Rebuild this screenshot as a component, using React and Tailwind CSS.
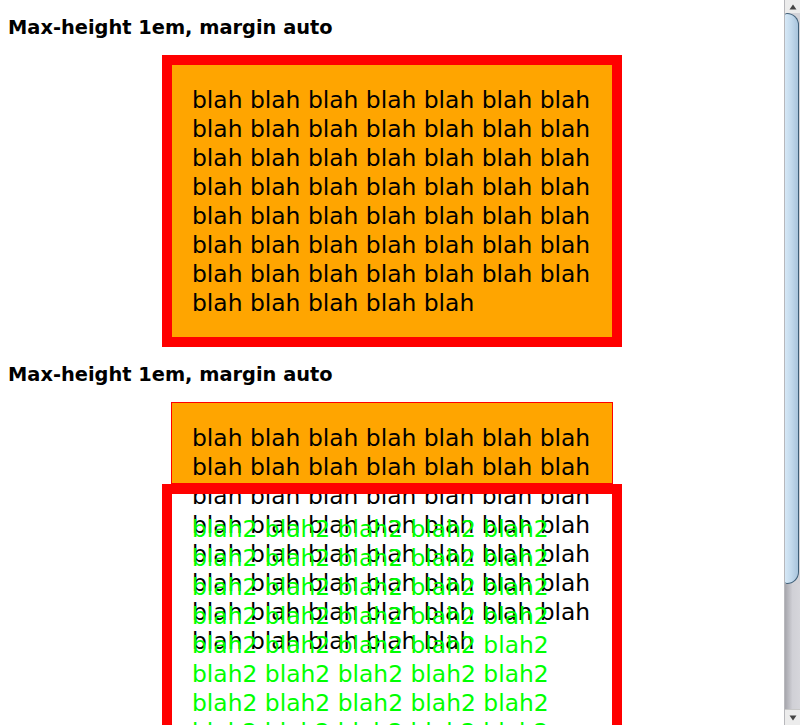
const blah = Array(54).fill("blah").join(" ");
const blah2 = Array(60).fill("blah2").join(" ");

const Heading = () => (
  <h4 className="mt-[17px] mb-[16px] h-[22px] text-[19.4px] leading-[22px] font-bold text-black">
    Max-height 1em, margin auto
  </h4>
);

const Scrollbar = () => (
  <div className="w-[16px] h-full flex flex-col bg-[#d3d3d8] border-l border-[#b8b8bc]">
    <div className="h-[13px] flex items-center justify-center bg-[#ececec]">
      <svg width="8" height="6" viewBox="0 0 8 6">
        <path d="M4 0.5 L7.5 5.5 L0.5 5.5 Z" fill="#444" />
      </svg>
    </div>
    <div className="h-[571px] mr-[1px] rounded-tr-[12px] rounded-br-[12px] rounded-tl-[2px] rounded-bl-[2px] border border-l-0 border-[#3f5f78] bg-gradient-to-r from-[#d6e8f6] via-[#c2d9ec] to-[#a9c4dc]" />
    <div className="flex-1 bg-gradient-to-r from-[#a6a6ac] via-[#d0d0d6] to-[#d6d6db]" />
    <div className="h-[16px] flex items-center justify-center bg-[#ececec] border-t border-[#c8c8c8]">
      <svg width="8" height="6" viewBox="0 0 8 6">
        <path d="M0.5 0.5 L7.5 0.5 L4 5.5 Z" fill="#444" />
      </svg>
    </div>
  </div>
);

const App = () => {
  return (
    <div className="flex w-[800px] h-[725px] overflow-hidden bg-white font-['DejaVu_Sans',sans-serif]">
      <div className="flex-1 flex flex-col px-[8px]">
        <Heading />
        <div className="mx-auto w-[460px] border-[10px] border-[#ff0000] bg-[#ffa500] px-[20px] pt-[21px] pb-[19px] text-[23.4px] leading-[29px] text-black">
          {blah}
        </div>

        <Heading />
        <div className="mx-auto w-[442px] h-[82px] shrink-0 border border-[#ff0000] bg-[#ffa500] px-[20px] pt-[21px] pb-[19px] text-[23.4px] leading-[29px] text-black">
          {blah}
        </div>
        <div className="relative mx-auto w-[460px] shrink-0 border-[10px] border-[#ff0000] px-[20px] pt-[21px] pb-[19px] text-[23.4px] leading-[29px] text-[#00ff00]">
          {blah2}
        </div>
      </div>
      <Scrollbar />
    </div>
  );
};

export default App;
